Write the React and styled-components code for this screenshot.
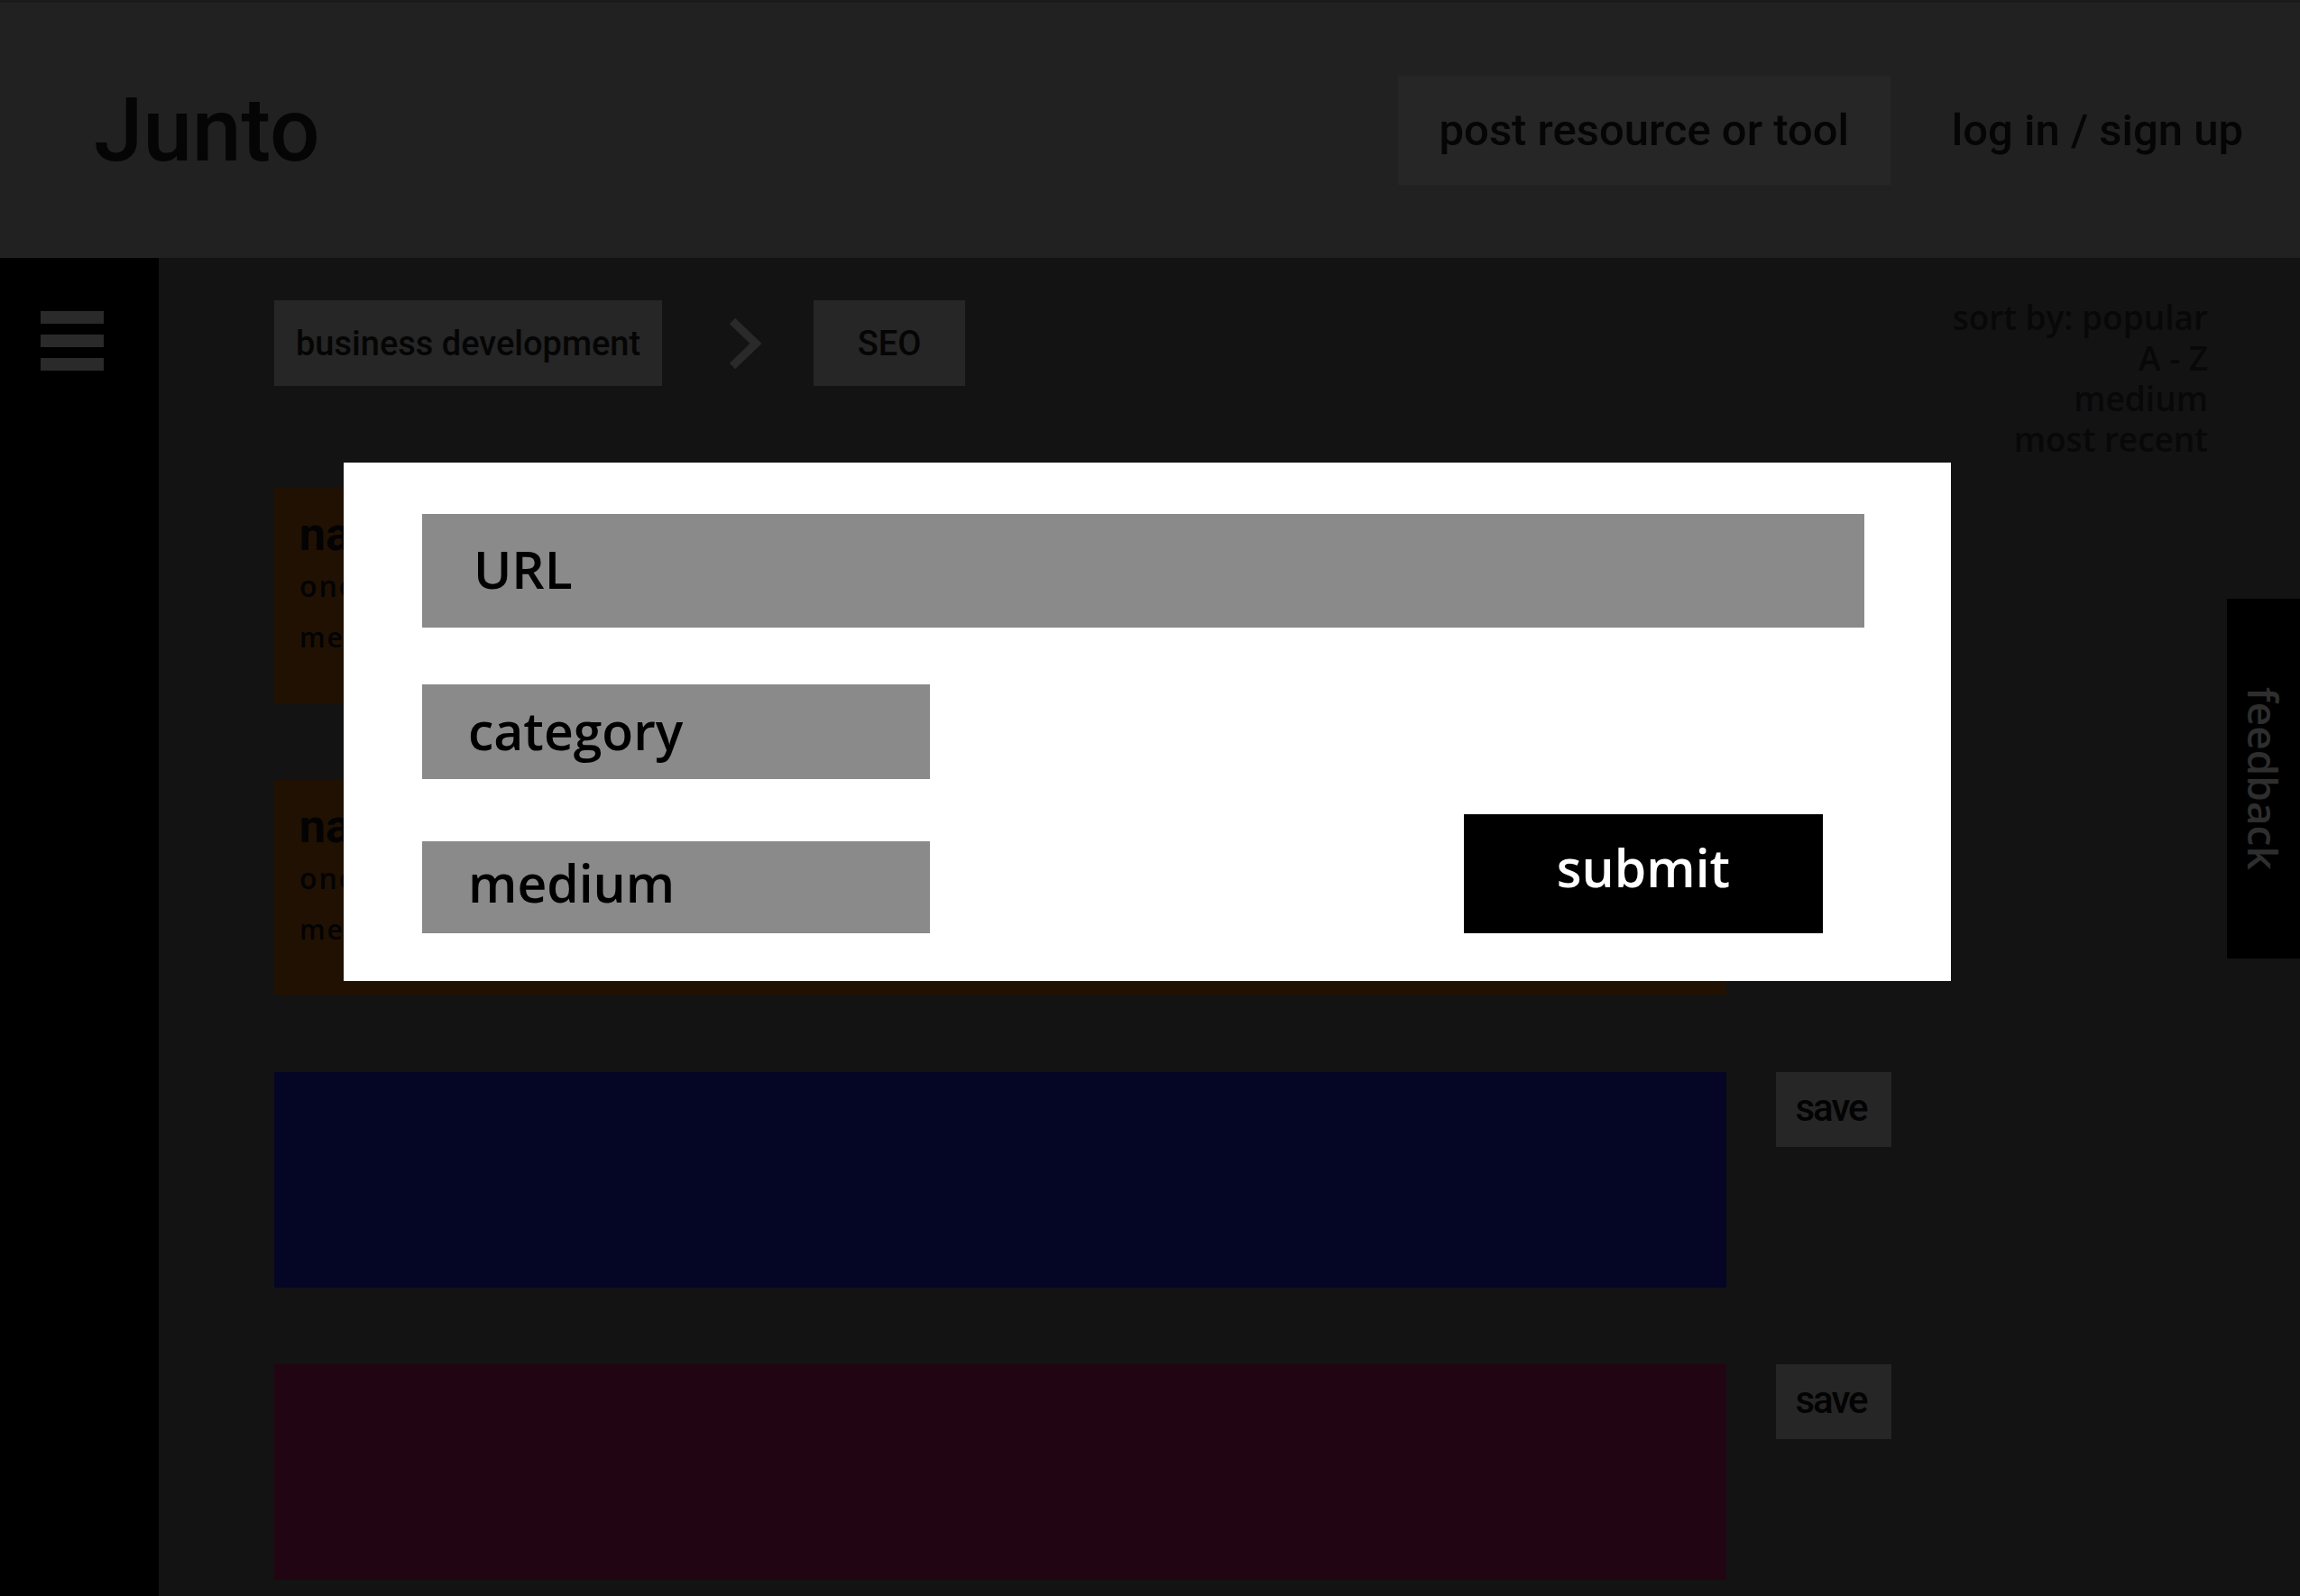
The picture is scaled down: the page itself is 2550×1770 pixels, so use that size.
import React from "react";
import styled, { createGlobalStyle } from "styled-components";

const GlobalStyle = createGlobalStyle`
  html, body {
    margin: 0;
    padding: 0;
    background: #131313;
  }
  body {
    font-family: "Open Sans", "Noto Sans", sans-serif;
  }
  * {
    box-sizing: border-box;
  }
`;

const Page = styled.div`
  min-height: 100vh;
  display: flex;
  flex-direction: column;
  background: #131313;
`;

const Header = styled.header`
  height: 286px;
  border-top: 3px solid #1a1a1a;
  background: #212121;
  display: flex;
  align-items: center;
  padding: 0 63px 0 104px;
  font-family: Roboto, "Liberation Sans", sans-serif;
  font-weight: 500;
  color: #050505;
`;

const Logo = styled.div`
  font-size: 98px;
  line-height: 1;
  margin-right: auto;
`;

const PostButton = styled.div`
  width: 546px;
  height: 121px;
  background: #262626;
  display: flex;
  align-items: center;
  justify-content: center;
  font-size: 49px;
  margin-right: 68px;
`;

const Login = styled.div`
  font-size: 49px;
`;

const Body = styled.div`
  flex: 1;
  display: flex;
`;

const Sidebar = styled.aside`
  width: 176px;
  flex-shrink: 0;
  background: #000;
  padding: 59px 0 0 45px;
`;

const Hamburger = styled.div`
  display: flex;
  flex-direction: column;
  gap: 12px;
`;

const Bar = styled.span`
  width: 70px;
  height: 14px;
  background: #2a2a2a;
`;

const Main = styled.main`
  flex: 1;
  padding: 43px 102px 60px 128px;
`;

const TopRow = styled.div`
  display: flex;
  justify-content: space-between;
  align-items: flex-start;
`;

const Crumbs = styled.nav`
  display: flex;
  align-items: center;
  margin-top: 4px;
`;

const Crumb = styled.div`
  height: 95px;
  min-width: ${(p) => p.$min || 0}px;
  padding: 0 24px;
  background: #262626;
  display: flex;
  align-items: center;
  justify-content: center;
  font-family: Roboto, "Liberation Sans", sans-serif;
  font-weight: 500;
  font-size: 38px;
  color: #050505;
`;

const Chevron = styled.svg`
  margin: 0 58px 0 73px;
`;

const SortList = styled.div`
  text-align: right;
  font-size: 37px;
  font-weight: 600;
  line-height: 45px;
  color: #080808;
`;

const List = styled.div`
  margin-top: 32px;
  display: flex;
  flex-direction: column;
  gap: 85px;
`;

const Row = styled.div`
  display: flex;
  align-items: flex-start;
  gap: 55px;
`;

const Card = styled.div`
  width: 1610px;
  height: 239px;
  background: ${(p) => p.$color};
  padding: 22px 28px;
  color: #030303;
`;

const CardName = styled.div`
  font-family: Roboto, "Liberation Sans", sans-serif;
  font-weight: 700;
  font-size: 52px;
  line-height: 60px;
`;

const CardDesc = styled.div`
  margin-top: 5px;
  font-size: 32px;
  font-weight: 600;
  line-height: 44px;
  letter-spacing: 2px;
`;

const CardMedium = styled.div`
  margin-top: 13px;
  font-size: 30px;
  font-weight: 600;
  line-height: 44px;
  letter-spacing: 2px;
`;

const SaveButton = styled.div`
  width: 128px;
  height: 83px;
  background: #262626;
  display: flex;
  align-items: center;
  justify-content: center;
  font-family: Roboto, "Liberation Sans", sans-serif;
  font-weight: 500;
  font-size: 42px;
  letter-spacing: -2px;
  color: #030303;
  padding: 0 6px 4px 0;
`;

const Overlay = styled.div`
  position: fixed;
  inset: 0;
  display: flex;
  justify-content: center;
  align-items: flex-start;
  padding: 513px 6px 0 0;
`;

const Modal = styled.form`
  width: 1782px;
  height: 575px;
  background: #fff;
  padding: 57px 96px 53px 87px;
  display: flex;
  flex-direction: column;
`;

const Field = styled.div`
  width: ${(p) => (p.$wide ? "100%" : "563px")};
  height: ${(p) => p.$h}px;
  background: #8a8a8a;
  display: flex;
  align-items: center;
  padding-left: ${(p) => (p.$wide ? 57 : 51)}px;
  padding-bottom: ${(p) => p.$lift || 0}px;
  font-size: 57px;
  font-weight: 600;
  color: #000;
`;

const FormRow = styled.div`
  margin-top: 63px;
  display: flex;
  justify-content: space-between;
  align-items: flex-end;
`;

const FieldColumn = styled.div`
  display: flex;
  flex-direction: column;
  gap: 69px;
`;

const Submit = styled.button`
  width: 398px;
  height: 132px;
  margin-right: 46px;
  border: none;
  background: #000;
  color: #fff;
  font-family: "Open Sans", "Noto Sans", sans-serif;
  font-size: 57px;
  font-weight: 600;
  padding: 0 0 14px;
`;

const FeedbackTab = styled.div`
  position: fixed;
  right: 0;
  top: 664px;
  width: 81px;
  height: 399px;
  background: #000;
  display: flex;
  align-items: center;
  justify-content: center;
`;

const FeedbackText = styled.span`
  writing-mode: vertical-rl;
  font-size: 46px;
  font-weight: 600;
  color: #2e2e2e;
`;

const resources = [
  { id: 1, color: "#201103", text: true },
  { id: 2, color: "#201103", text: true },
  { id: 3, color: "#050526" },
  { id: 4, color: "#220512" },
];

const App = () => {
  return (
    <Page>
      <GlobalStyle />
      <Header>
        <Logo>Junto</Logo>
        <PostButton>post resource or tool</PostButton>
        <Login>log in / sign up</Login>
      </Header>
      <Body>
        <Sidebar>
          <Hamburger>
            <Bar />
            <Bar />
            <Bar />
          </Hamburger>
        </Sidebar>
        <Main>
          <TopRow>
            <Crumbs>
              <Crumb>business development</Crumb>
              <Chevron width="37" height="58" viewBox="0 0 37 58">
                <polyline
                  points="5,4 31,29 5,54"
                  fill="none"
                  stroke="#2a2a2a"
                  strokeWidth="9"
                />
              </Chevron>
              <Crumb $min={168}>SEO</Crumb>
            </Crumbs>
            <SortList>
              <div>sort by: popular</div>
              <div>A - Z</div>
              <div>medium</div>
              <div>most recent</div>
            </SortList>
          </TopRow>
          <List>
            {resources.map((item) => (
              <Row key={item.id}>
                <Card $color={item.color}>
                  {item.text && (
                    <>
                      <CardName>name</CardName>
                      <CardDesc>one line description</CardDesc>
                      <CardMedium>medium</CardMedium>
                    </>
                  )}
                </Card>
                <SaveButton>save</SaveButton>
              </Row>
            ))}
          </List>
        </Main>
      </Body>
      <FeedbackTab>
        <FeedbackText>feedback</FeedbackText>
      </FeedbackTab>
      <Overlay>
        <Modal onSubmit={(e) => e.preventDefault()}>
          <Field $wide $h={126} $lift={4}>
            URL
          </Field>
          <FormRow>
            <FieldColumn>
              <Field $h={105} $lift={4}>
                category
              </Field>
              <Field $h={102} $lift={10}>
                medium
              </Field>
            </FieldColumn>
            <Submit type="submit">submit</Submit>
          </FormRow>
        </Modal>
      </Overlay>
    </Page>
  );
};

export default App;
